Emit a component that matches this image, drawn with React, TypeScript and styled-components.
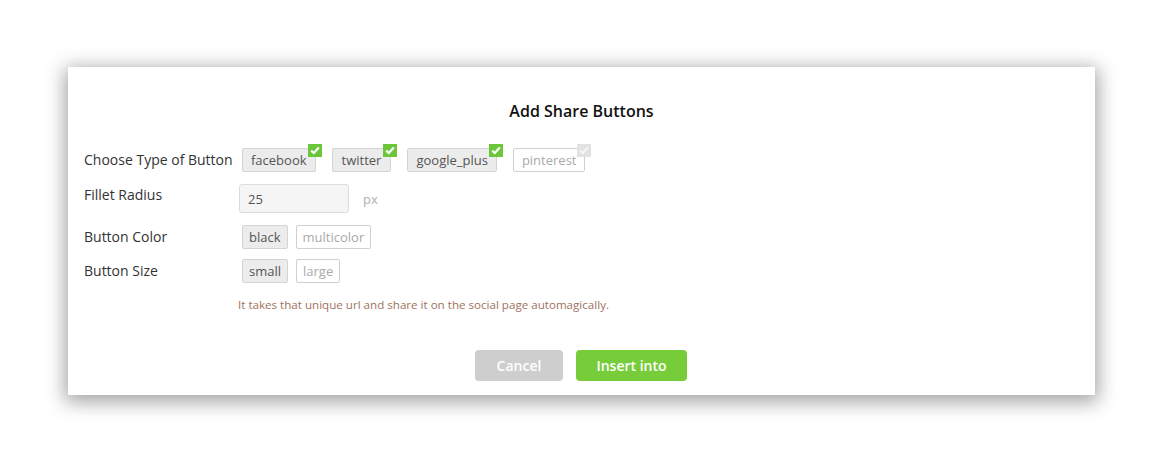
import React from "react";
import styled, { createGlobalStyle } from "styled-components";

const Global = createGlobalStyle`
  html, body { margin: 0; padding: 0; background: #fff; }
  body { font-family: "Open Sans", "Noto Sans", sans-serif; }
  * { box-sizing: border-box; }
`;

const Page = styled.div`
  width: 1163px;
  height: 463px;
  padding: 67px 0 0 68px;
`;

const Dialog = styled.div`
  width: 1027px;
  height: 328px;
  background: #fff;
  box-shadow: 0 4px 18px 3px rgba(0, 0, 0, 0.36);
  display: flex;
  flex-direction: column;
  padding: 33px 16px 0 16px;
`;

const Title = styled.h2`
  margin: 0 0 26px;
  text-align: center;
  font-size: 16px;
  line-height: 22px;
  font-weight: 600;
  color: #111;
`;

const Row = styled.div<{ $gap: number; $align?: string }>`
  display: flex;
  align-items: ${(p) => p.$align || "center"};
  margin-bottom: ${(p) => p.$gap}px;
`;

const Label = styled.div<{ $offset?: number }>`
  width: 155px;
  font-size: 14px;
  line-height: 20px;
  color: #333;
  margin-top: ${(p) => p.$offset || 0}px;
`;

const Chips = styled.div<{ $gap: number }>`
  display: flex;
  gap: ${(p) => p.$gap}px;
  padding-left: 3px;
`;

const Chip = styled.div<{ $on: boolean; $pad: number }>`
  position: relative;
  height: 24px;
  padding: 0 ${(p) => p.$pad}px;
  display: flex;
  align-items: center;
  font-size: 13px;
  border-radius: 2px;
  border: 1px solid ${(p) => (p.$on ? "#d4d4d4" : "#d0d0d0")};
  background: ${(p) => (p.$on ? "#ececec" : "#fff")};
  color: ${(p) => (p.$on ? "#555" : "#aaa")};
`;

const Check = styled.span<{ $on: boolean }>`
  position: absolute;
  right: -7px;
  top: -5px;
  width: 14px;
  height: 13px;
  background: ${(p) => (p.$on ? "#6cc63a" : "#e2e2e2")};
  display: flex;
  align-items: center;
  justify-content: center;
`;

const Input = styled.div`
  width: 110px;
  height: 29px;
  border: 1px solid #dcdcdc;
  border-radius: 3px;
  background: #f5f5f5;
  font-size: 13px;
  color: #555;
  display: flex;
  align-items: center;
  padding-left: 8px;
`;

const Unit = styled.span`
  align-self: center;
  margin-left: 14px;
  font-size: 13px;
  color: #b0b0b0;
`;

const Help = styled.p`
  margin: 0 0 37px 154px;
  font-size: 11.6px;
  line-height: 16px;
  color: #a0725e;
`;

const Actions = styled.div`
  display: flex;
  justify-content: center;
  gap: 13px;
  padding-right: 1px;
`;

const Btn = styled.button<{ $primary?: boolean }>`
  height: 31px;
  width: ${(p) => (p.$primary ? 111 : 88)}px;
  border: none;
  border-radius: 4px;
  font-family: "Open Sans", sans-serif;
  font-size: 14px;
  font-weight: 600;
  color: #fff;
  background: ${(p) => (p.$primary ? "#77cc3a" : "#cecece")};
`;

const Tick = ({ on }: { on: boolean }) => (
  <svg width="10" height="9" viewBox="0 0 10 9">
    <polyline
      points="1.2,4.6 3.8,7 8.8,1.6"
      fill="none"
      stroke={on ? "#fff" : "#f6f6f6"}
      strokeWidth="2.2"
    />
  </svg>
);

const Toggle = ({
  label,
  on,
  check,
  pad = 6,
}: {
  label: string;
  on: boolean;
  check?: boolean;
  pad?: number;
}) => (
  <Chip $on={on} $pad={pad}>
    {label}
    {check && (
      <Check $on={on}>
        <Tick on={on} />
      </Check>
    )}
  </Chip>
);

export default function App() {
  return (
    <Page>
      <Global />
      <Dialog>
        <Title>Add Share Buttons</Title>
        <Row $gap={12}>
          <Label>Choose Type of Button</Label>
          <Chips $gap={16}>
            <Toggle label="facebook" on check pad={8} />
            <Toggle label="twitter" on check pad={9} />
            <Toggle label="google_plus" on check pad={8} />
            <Toggle label="pinterest" on={false} check pad={8} />
          </Chips>
        </Row>
        <Row $gap={12} $align="flex-start">
          <Label $offset={1}>Fillet Radius</Label>
          <Input>25</Input>
          <Unit>px</Unit>
        </Row>
        <Row $gap={10}>
          <Label>Button Color</Label>
          <Chips $gap={8}>
            <Toggle label="black" on />
            <Toggle label="multicolor" on={false} />
          </Chips>
        </Row>
        <Row $gap={14}>
          <Label>Button Size</Label>
          <Chips $gap={8}>
            <Toggle label="small" on />
            <Toggle label="large" on={false} />
          </Chips>
        </Row>
        <Help>It takes that unique url and share it on the social page automagically.</Help>
        <Actions>
          <Btn>Cancel</Btn>
          <Btn $primary>Insert into</Btn>
        </Actions>
      </Dialog>
    </Page>
  );
}
